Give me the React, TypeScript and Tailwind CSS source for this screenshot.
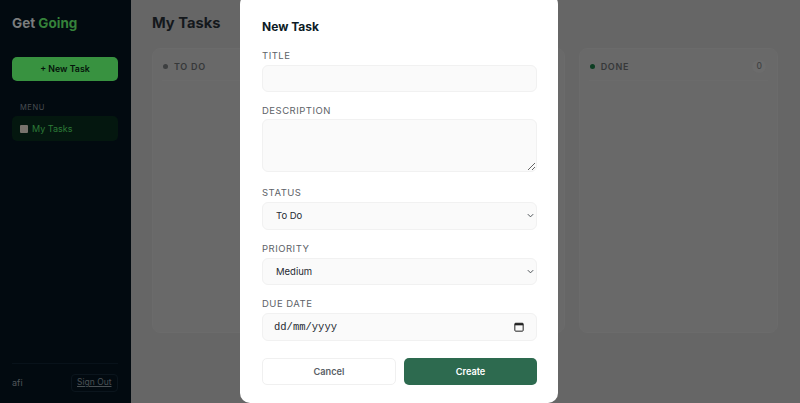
const sans = "font-['Inter','Liberation_Sans',sans-serif]";

function Column({ name, dot, count }: { name: string; dot: string; count?: string }) {
  return (
    <section className="flex h-[285px] flex-col rounded-[8px] border border-[#6b6b6b] bg-[#696969] px-[9px]">
      <div className="flex h-[32px] items-center gap-[6px] border-b border-[#6b6b6b] pl-[1px] pt-[4px]">
        <span className={`h-[5px] w-[5px] rounded-full ${dot}`} />
        <span className="text-[9px] font-semibold tracking-[0.7px] text-[#363839]">{name}</span>
        {count && <span className="ml-auto mr-[2px] rounded-full bg-[#6c6c6c] px-[4px] text-[8.5px] font-medium text-[#3f4142]">{count}</span>}
      </div>
    </section>
  );
}

function Label({ children, className = "mb-[3px]" }: { children: string; className?: string }) {
  return <label className={`block text-[9.5px] font-normal leading-[12px] tracking-[0.5px] text-[#5d6268] ${className}`}>{children}</label>;
}

const field = "block w-full rounded-[6px] border border-[#f1f1f1] bg-[#fafafa] text-[#1f2a33] outline-none";

function Select({ value, height }: { value: string; height: string }) {
  return (
    <div className={`${field} ${height} relative flex items-center pl-[13px] pt-[1px] text-[9.5px]`}>
      <span>{value}</span>
      <svg className="absolute right-[1px] top-[8px] h-[9px] w-[9px] text-[#4d5358]" viewBox="0 0 10 10" fill="none" stroke="currentColor" strokeWidth="1.1">
        <path d="M2 3.5 5 6.5 8 3.5" />
      </svg>
    </div>
  );
}

export default function App() {
  return (
    <div className={`${sans} relative flex h-[403px] w-[800px] overflow-hidden bg-[#666666]`}>
      <aside className="flex w-[131px] shrink-0 flex-col bg-[#020a10] pl-[12px] pr-[13px]">
        <div className="mt-[14px] text-[13.5px] font-bold leading-[18px] text-[#7b7d7e]">
          Get <span className="text-[#35823a]">Going</span>
        </div>
        <button className="mt-[25px] h-[24px] w-full rounded-[5px] bg-[#389240] text-[8.8px] font-semibold text-[#04130a]">+ New Task</button>
        <div className="mt-[22px] px-[8px] text-[7.5px] font-normal leading-[10px] tracking-[0.6px] text-[#4a4f53]">MENU</div>
        <nav className="mt-[3px] flex h-[25px] items-center gap-[4px] rounded-[5px] bg-[#04170f] px-[8px] text-[9px] text-[#2d7a37]">
          <span className="h-[8px] w-[8px] rounded-[1px] bg-[#77726c]" />
          My Tasks
        </nav>
        <div className="mt-auto flex h-[40px] items-center justify-between border-t border-[#08121a] pb-[2px]">
          <span className="text-[9px] text-[#50565a]">afi</span>
          <button className="h-[18px] rounded-[4px] border border-[#0b151d] px-[5.5px] text-[8.5px] text-[#4a5155] underline">Sign Out</button>
        </div>
      </aside>

      <main className="min-w-0 flex-1 pl-[21px] pr-[22px]">
        <h1 className="mt-[13px] text-[14.7px] font-bold leading-[20px] text-[#14181c]">My Tasks</h1>
        <div className="mt-[15px] grid grid-cols-3 gap-[14px]">
          <Column name="TO DO" dot="bg-[#3d3f40]" />
          <Column name="IN PROGRESS" dot="bg-[#3d3f40]" />
          <Column name="DONE" dot="bg-[#0c3d22]" count="0" />
        </div>
      </main>

      <div className="absolute left-[240px] top-[-6px] h-[409px] w-[318px] rounded-[10px] bg-white pl-[22px] pr-[21px] pt-[25px]">
        <h2 className="text-[12px] font-bold leading-[16px] text-[#0d1b26]">New Task</h2>
        <div className="mt-[15px]">
          <Label>TITLE</Label>
          <input className={`${field} h-[27px]`} />
        </div>
        <div className="mt-[13px]">
          <Label className="mb-[2px]">DESCRIPTION</Label>
          <textarea className={`${field} h-[53px]`} />
        </div>
        <div className="mt-[15px]">
          <Label>STATUS</Label>
          <Select value="To Do" height="h-[28px]" />
        </div>
        <div className="mt-[13px]">
          <Label>PRIORITY</Label>
          <Select value="Medium" height="h-[27px]" />
        </div>
        <div className="mt-[13px]">
          <Label>DUE DATE</Label>
          <div className={`${field} flex h-[28px] items-center justify-between pl-[11px] pr-[12px]`}>
            <span className="pt-[2px] font-['Liberation_Mono',monospace] text-[10.5px]">dd/mm/yyyy</span>
            <svg className="h-[10px] w-[10px] text-[#222]" viewBox="0 0 12 12" fill="none">
              <rect x="1" y="1.5" width="10" height="9.5" rx="1" stroke="currentColor" strokeWidth="1.2" />
              <rect x="1" y="1.5" width="10" height="2.5" fill="currentColor" />
            </svg>
          </div>
        </div>
        <div className="mt-[17px] grid grid-cols-[134px_1fr] gap-[8px]">
          <button className="h-[27px] rounded-[5px] border border-[#f0f0f0] bg-white text-[9.2px] font-semibold text-[#5a6066]">Cancel</button>
          <button className="h-[27px] rounded-[5px] bg-[#2d6a4f] text-[9.2px] font-semibold text-white">Create</button>
        </div>
      </div>
    </div>
  );
}
